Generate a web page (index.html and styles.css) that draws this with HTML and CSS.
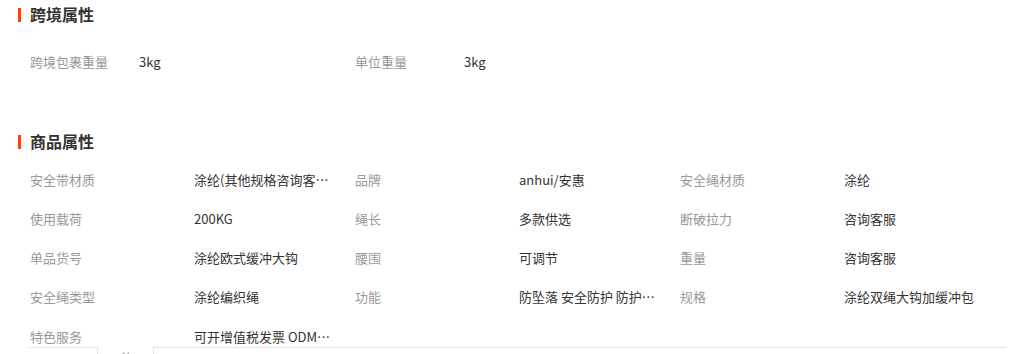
FILE: index.html
```html
<!DOCTYPE html>
<html lang="zh-CN">
<head>
<meta charset="utf-8">
<title>属性</title>
<link rel="stylesheet" href="styles.css">
</head>
<body>
<div class="page">
  <div class="sec-title sec1"><span class="bar"></span><span>跨境属性</span></div>
  <div class="grid cross">
    <div class="item"><span class="label">跨境包裹重量</span><span class="value">3kg</span></div>
    <div class="item"><span class="label">单位重量</span><span class="value">3kg</span></div>
  </div>

  <div class="sec-title sec2"><span class="bar"></span><span>商品属性</span></div>
  <div class="grid prod">
    <div class="item"><span class="label">安全带材质</span><span class="value">涂纶(其他规格咨询客服)</span></div>
    <div class="item"><span class="label">品牌</span><span class="value">anhui/安惠</span></div>
    <div class="item"><span class="label">安全绳材质</span><span class="value">涂纶</span></div>
    <div class="item"><span class="label">使用载荷</span><span class="value">200KG</span></div>
    <div class="item"><span class="label">绳长</span><span class="value">多款供选</span></div>
    <div class="item"><span class="label">断破拉力</span><span class="value">咨询客服</span></div>
    <div class="item"><span class="label">单品货号</span><span class="value">涂纶欧式缓冲大钩</span></div>
    <div class="item"><span class="label">腰围</span><span class="value">可调节</span></div>
    <div class="item"><span class="label">重量</span><span class="value">咨询客服</span></div>
    <div class="item"><span class="label">安全绳类型</span><span class="value">涂纶编织绳</span></div>
    <div class="item"><span class="label">功能</span><span class="value">防坠落 安全防护 防护安全带</span></div>
    <div class="item"><span class="label">规格</span><span class="value">涂纶双绳大钩加缓冲包</span></div>
    <div class="item"><span class="label">特色服务</span><span class="value">可开增值税发票 ODM定制</span></div>
  </div>

  <div class="tabbar">
    <div class="tab-left"></div>
    <div class="tab-x">✕</div>
    <div class="tab-right"></div>
  </div>
</div>
</body>
</html>
```

FILE: styles.css
```css
html, body {
  margin: 0;
  padding: 0;
  background: #fff;
}
body {
  font-family: "Noto Sans CJK SC", "Noto Sans", sans-serif;
  font-size: 13px;
  color: #333;
  overflow: hidden;
}
.page {
  position: relative;
  width: 1017px;
  height: 354px;
  overflow: hidden;
}
.sec-title {
  display: flex;
  align-items: center;
  height: 30px;
  padding-left: 18px;
  font-size: 16px;
  font-weight: bold;
  color: #333;
}
.sec-title .bar {
  width: 3px;
  height: 14px;
  background: #ff4400;
  margin-right: 9px;
}
.sec1 {
  margin-top: -1px;
}
.sec1 .bar {
  margin-top: 2px;
}
.sec2 {
  margin-top: 45px;
}
.sec2 .bar {
  margin-top: 2px;
}
.grid {
  display: grid;
  grid-template-columns: 325px 325px 325px;
  padding-left: 30px;
}
.cross {
  margin-top: 12px;
}
.cross .item {
  height: 40px;
}
.cross .label {
  width: 109px;
}
.prod {
  margin-top: 3.4px;
}
.prod .item {
  height: 39.25px;
}
.prod .label {
  width: 164px;
}
.item {
  display: flex;
  align-items: center;
  white-space: nowrap;
}
.label {
  flex: none;
  color: #999;
}
.value {
  color: #333;
  max-width: 138px;
  overflow: hidden;
  text-overflow: ellipsis;
  white-space: nowrap;
}
.tabbar {
  position: absolute;
  left: 29px;
  top: 347px;
  width: 977px;
  height: 20px;
  display: flex;
  background: #fff;
}
.tab-left {
  width: 68px;
  border-top: 1px solid #e3e3e3;
  border-right: 1px solid #e3e3e3;
}
.tab-x {
  width: 55px;
  text-align: center;
  color: #aaa;
  font-size: 12px;
  line-height: 12px;
  padding-top: 2px;
}
.tab-right {
  flex: 1;
  border-top: 1px solid #e3e3e3;
  border-left: 1px solid #e3e3e3;
}
```
